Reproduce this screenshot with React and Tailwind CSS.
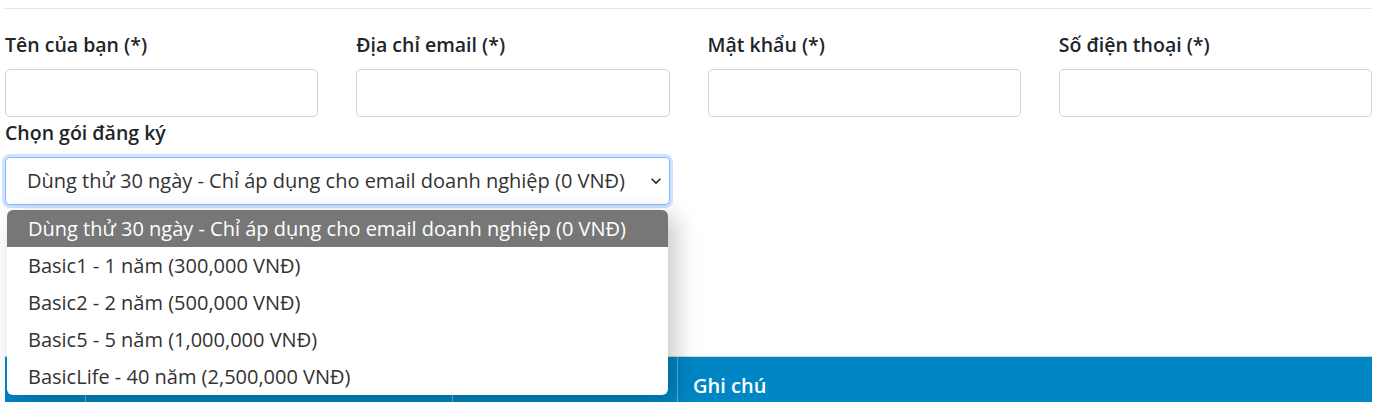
import React from 'react';

const fields = ['Tên của bạn (*)', 'Địa chỉ email (*)', 'Mật khẩu (*)', 'Số điện thoại (*)'];

const plans = [
  'Dùng thử 30 ngày - Chỉ áp dụng cho email doanh nghiệp (0 VNĐ)',
  'Basic1 - 1 năm (300,000 VNĐ)',
  'Basic2 - 2 năm (500,000 VNĐ)',
  'Basic5 - 5 năm (1,000,000 VNĐ)',
  'BasicLife - 40 năm (2,500,000 VNĐ)',
];

export default function App() {
  return (
    <div className="relative h-[402px] overflow-hidden bg-white pl-[5px] pr-[4px] pt-[8px] font-['Open_Sans',sans-serif] text-[#212529]">
      <div className="border-t border-[#e3e3e3]" />

      {/* Form fields */}
      <div className="mt-[24px] grid grid-cols-4 gap-x-[38px]">
        {fields.map((f) => (
          <div key={f} className="flex flex-col">
            <label className="h-[24px] whitespace-nowrap text-[19.5px] font-semibold leading-[24px]">{f}</label>
            <div className="mt-[12px] h-[48px] rounded-[5px] border border-[#ced4da] bg-white" />
          </div>
        ))}
      </div>

      {/* Plan select */}
      <div className="relative mt-[4px] w-[665px]">
        <label className="block h-[24px] text-[19.5px] font-semibold leading-[24px]">Chọn gói đăng ký</label>
        <div className="mt-[12px] flex h-[48px] items-center justify-between rounded-[5px] border border-[#86b7fe] bg-white pl-[21px] pr-[6px] shadow-[0_0_0_3px_rgba(13,110,253,0.2)]">
          <span className="whitespace-nowrap text-[20px] text-[#333]">{plans[0]}</span>
          <svg width="14" height="14" viewBox="0 0 16 16" fill="none" stroke="#333" strokeWidth="2" strokeLinecap="round" strokeLinejoin="round">
            <path d="M3.5 6l4.5 4.5L12.5 6" />
          </svg>
        </div>
      </div>

      {/* Table header */}
      <div className="mt-[151px] flex h-[46px] border-t border-[#d8d8d8] bg-[#0086c5] text-white">
        <div className="w-[81px] border-r border-[#5fb2dc]" />
        <div className="w-[367px] border-r border-[#5fb2dc]" />
        <div className="w-[225px] border-r border-[#5fb2dc]" />
        <div className="flex-1 pl-[15px] pt-[17px] text-[20px] font-semibold leading-[24px]">Ghi chú</div>
      </div>

      {/* Open dropdown list */}
      <div className="absolute left-[7px] top-[210px] w-[661px] overflow-hidden rounded-[6px] bg-white shadow-[8px_6px_24px_rgba(0,0,0,0.22)]">
        {plans.map((p, i) => (
          <div
            key={p}
            className={
              i === 0
                ? 'flex h-[37px] items-center whitespace-nowrap bg-[#777777] pl-[21px] text-[20px] text-white'
                : 'flex h-[37px] items-center whitespace-nowrap pl-[21px] text-[20px] text-[#333]'
            }
          >
            {p}
          </div>
        ))}
      </div>
    </div>
  );
}
